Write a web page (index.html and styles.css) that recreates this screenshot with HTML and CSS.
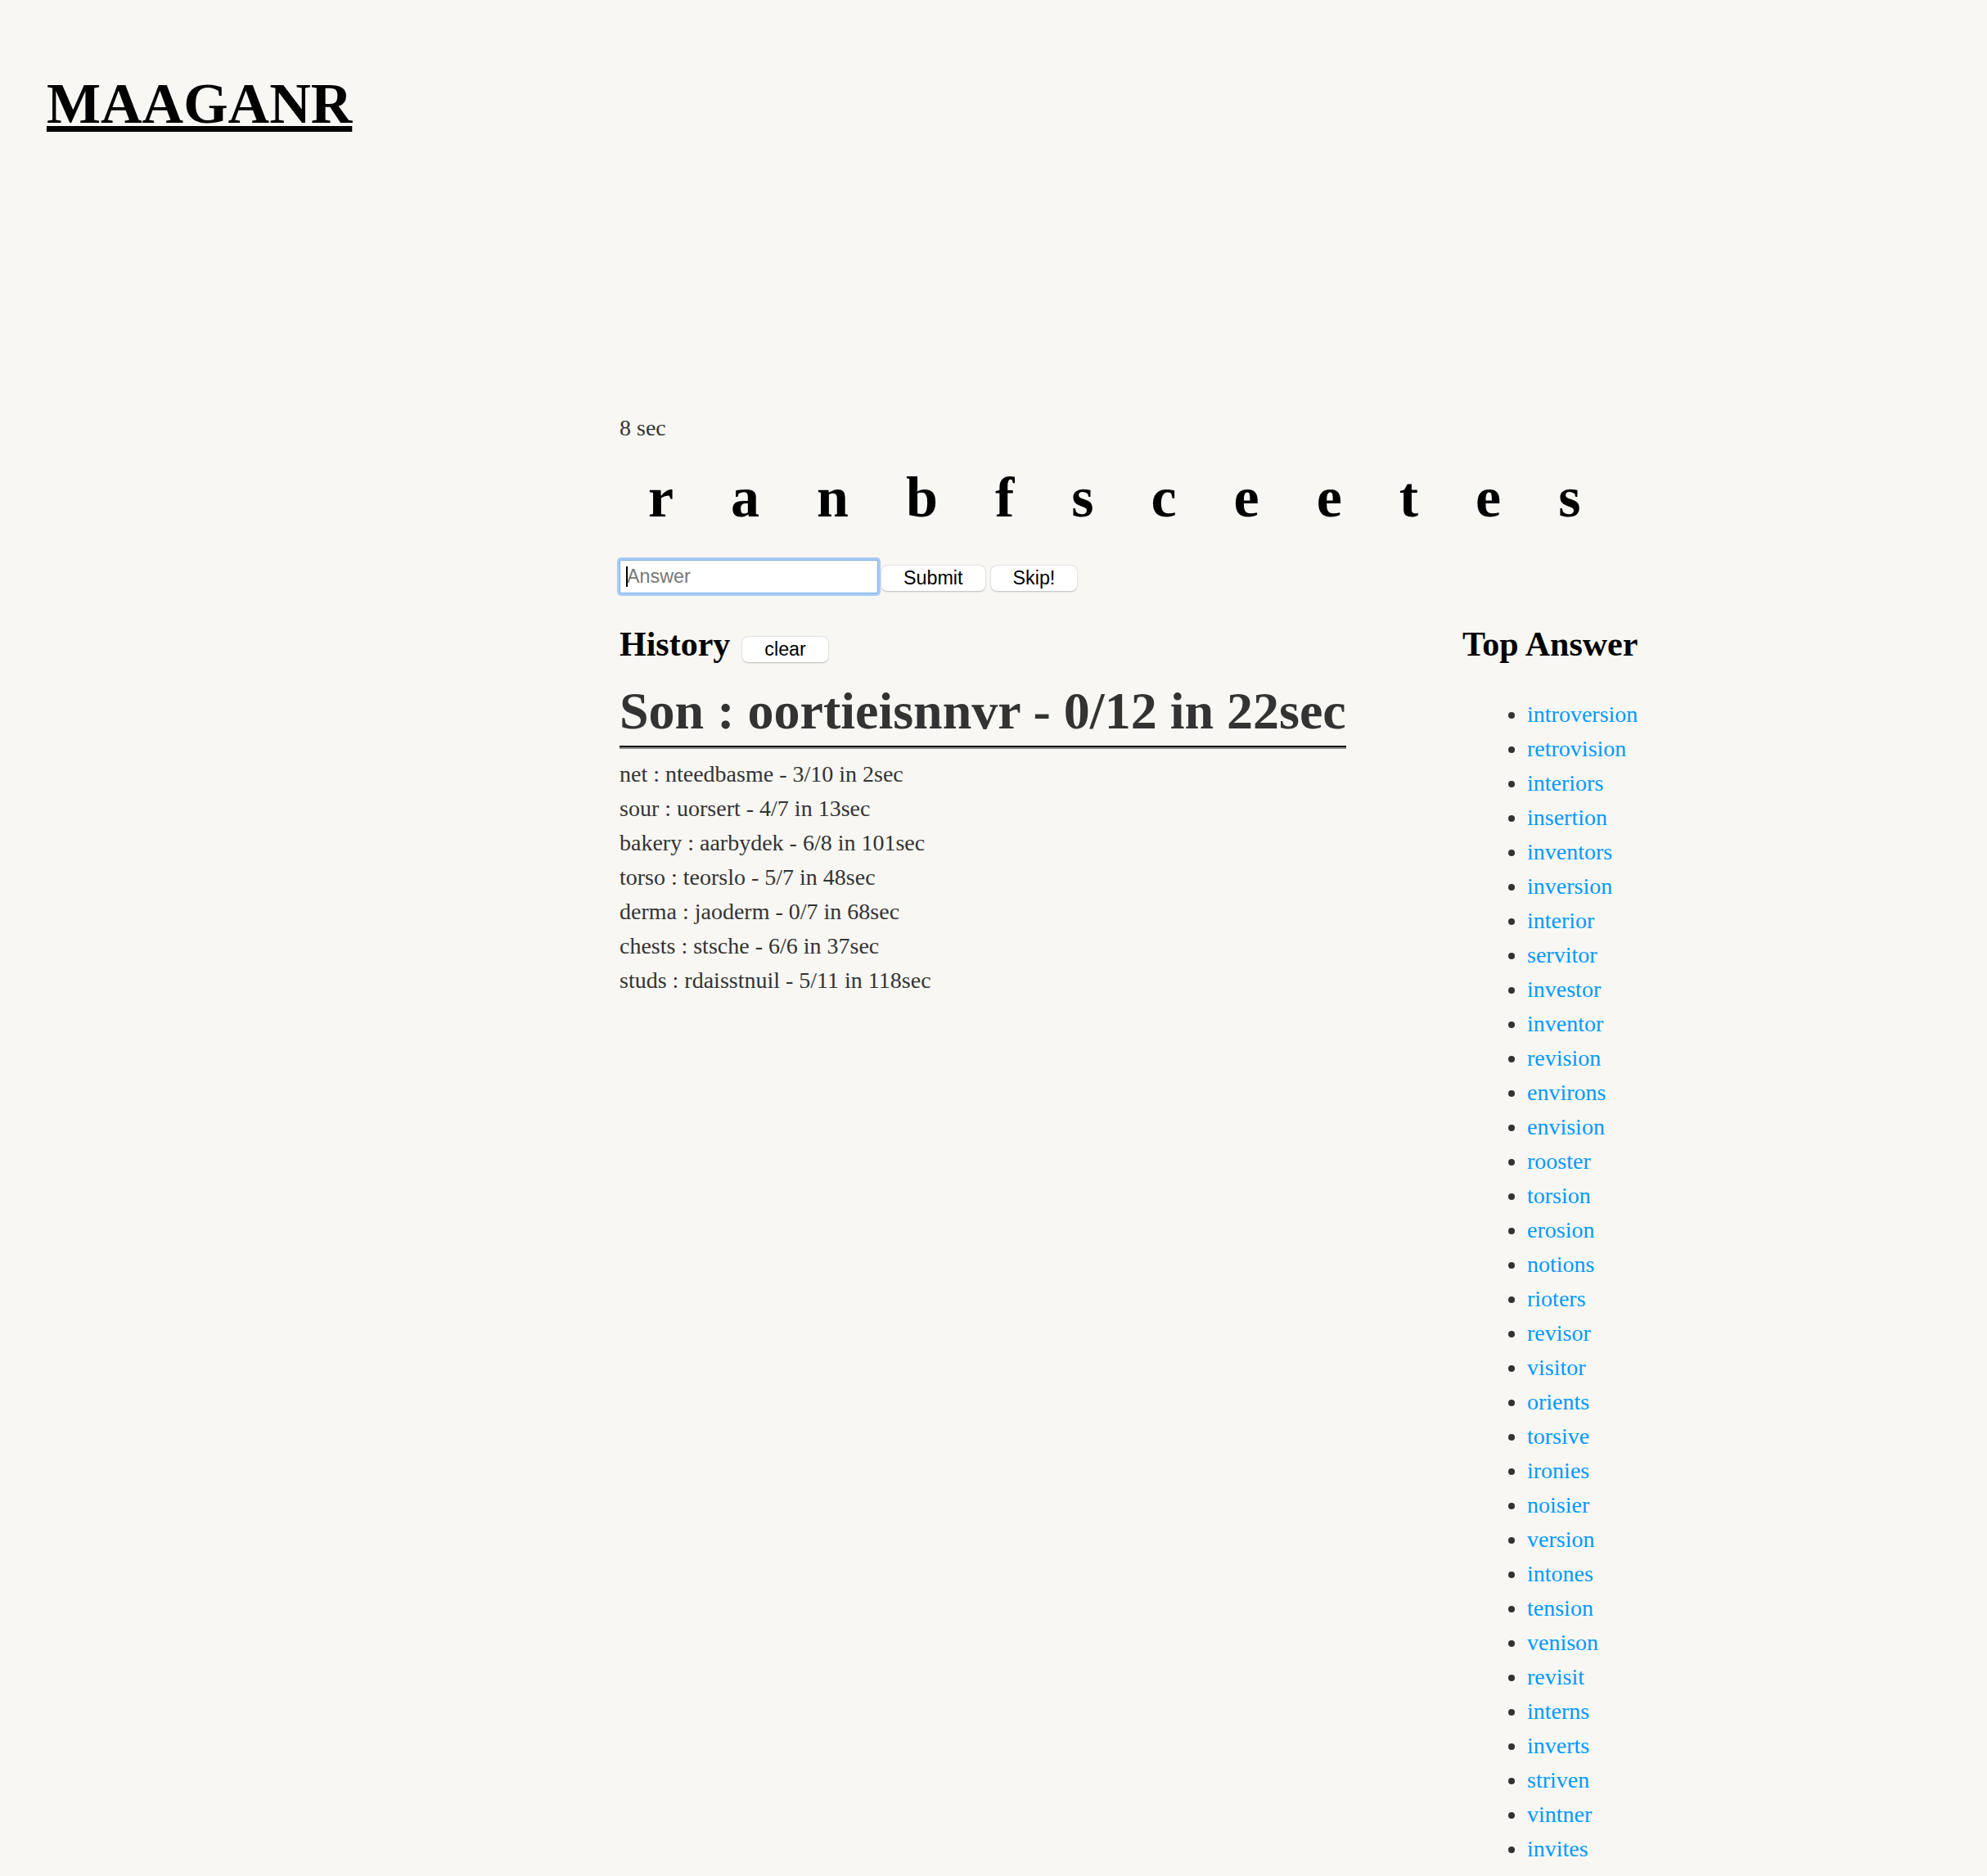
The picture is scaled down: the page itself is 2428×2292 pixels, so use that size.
FILE: index.html
```html
<!DOCTYPE html>
<html lang="en">
<head>
<meta charset="utf-8">
<title>MAAGANR</title>
<link rel="stylesheet" href="styles.css">
</head>
<body>
<header class="site-header">
  <h1 class="logo"><a href="#">MAAGANR</a></h1>
</header>
<main class="game">
  <div class="timer">8 sec</div>
  <div class="letters">
    <span>r</span><span>a</span><span>n</span><span>b</span><span>f</span><span>s</span><span>c</span><span>e</span><span>e</span><span>t</span><span>e</span><span>s</span>
  </div>
  <form class="answer-form" onsubmit="return false">
    <span class="answer-field"><input type="text" placeholder="Answer"><span class="caret"></span></span>
    <button type="button" class="btn btn-submit">Submit</button>
    <button type="button" class="btn btn-skip">Skip!</button>
  </form>
  <div class="columns">
    <section class="history">
      <div class="history-head">
        <h2 class="section-title">History</h2>
        <button type="button" class="btn">clear</button>
      </div>
      <h1 class="current">Son : oortieisnnvr - 0/12 in 22sec</h1>
      <ul class="history-list">
        <li>net : nteedbasme - 3/10 in 2sec</li>
        <li>sour : uorsert - 4/7 in 13sec</li>
        <li>bakery : aarbydek - 6/8 in 101sec</li>
        <li>torso : teorslo - 5/7 in 48sec</li>
        <li>derma : jaoderm - 0/7 in 68sec</li>
        <li>chests : stsche - 6/6 in 37sec</li>
        <li>studs : rdaisstnuil - 5/11 in 118sec</li>
      </ul>
    </section>
    <aside class="top-answers">
      <h2 class="section-title">Top Answer</h2>
      <ul class="answer-list">
        <li><a href="#">introversion</a></li>
        <li><a href="#">retrovision</a></li>
        <li><a href="#">interiors</a></li>
        <li><a href="#">insertion</a></li>
        <li><a href="#">inventors</a></li>
        <li><a href="#">inversion</a></li>
        <li><a href="#">interior</a></li>
        <li><a href="#">servitor</a></li>
        <li><a href="#">investor</a></li>
        <li><a href="#">inventor</a></li>
        <li><a href="#">revision</a></li>
        <li><a href="#">environs</a></li>
        <li><a href="#">envision</a></li>
        <li><a href="#">rooster</a></li>
        <li><a href="#">torsion</a></li>
        <li><a href="#">erosion</a></li>
        <li><a href="#">notions</a></li>
        <li><a href="#">rioters</a></li>
        <li><a href="#">revisor</a></li>
        <li><a href="#">visitor</a></li>
        <li><a href="#">orients</a></li>
        <li><a href="#">torsive</a></li>
        <li><a href="#">ironies</a></li>
        <li><a href="#">noisier</a></li>
        <li><a href="#">version</a></li>
        <li><a href="#">intones</a></li>
        <li><a href="#">tension</a></li>
        <li><a href="#">venison</a></li>
        <li><a href="#">revisit</a></li>
        <li><a href="#">interns</a></li>
        <li><a href="#">inverts</a></li>
        <li><a href="#">striven</a></li>
        <li><a href="#">vintner</a></li>
        <li><a href="#">invites</a></li>
        <li><a href="#">intros</a></li>
        <li><a href="#">irons</a></li>
      </ul>
    </aside>
  </div>
</main>
</body>
</html>
```

FILE: styles.css
```css
html, body {
  margin: 0;
  padding: 0;
}

body {
  background: #f8f7f3;
  color: #333;
  font-family: "Liberation Serif", "Times New Roman", serif;
  font-size: 28px;
  line-height: 42px;
}

.site-header {
  padding: 87px 0 0 57px;
}

.logo {
  margin: 0;
  font-size: 70px;
  line-height: 80px;
  font-weight: bold;
}

.logo a {
  color: #000;
  text-decoration: underline;
}

.game {
  margin-left: 757px;
  padding-top: 335px;
}

.timer {
  line-height: 42px;
}

.letters {
  display: flex;
  margin-top: 24px;
  font-size: 70px;
  line-height: 80px;
  font-weight: bold;
  color: #000;
}

.letters span {
  margin: 0 35px;
}

.answer-form {
  display: flex;
  align-items: flex-start;
  margin-top: 36px;
  height: 41px;
}

.answer-field {
  position: relative;
  display: block;
  margin-right: 4px;
}

.answer-field input {
  box-sizing: border-box;
  display: block;
  width: 316px;
  height: 41px;
  margin: 0;
  padding: 0 8px;
  border: 1px solid #79ace9;
  border-radius: 2px;
  box-shadow: 0 0 0 3px #a8ccf5;
  background: #fff;
  font-family: "Liberation Sans", Arial, sans-serif;
  font-size: 23.3px;
  color: #000;
  outline: none;
}

.answer-field input::placeholder {
  color: #777;
}

.caret {
  position: absolute;
  left: 8px;
  top: 8px;
  width: 2px;
  height: 25px;
  background: #000;
}

.btn {
  box-sizing: border-box;
  height: 31px;
  margin: 0;
  padding: 0 27px;
  border: 0;
  border-radius: 7px;
  background: #fff;
  box-shadow: 0 0.5px 2px rgba(0, 0, 0, 0.22), 0 0 0 0.5px rgba(0, 0, 0, 0.06);
  font-family: "Liberation Sans", Arial, sans-serif;
  font-size: 23.3px;
  line-height: 31px;
  color: #000;
}

.answer-form .btn {
  margin-top: 7px;
}

.btn-skip {
  margin-left: 7px;
}

.columns {
  display: flex;
  align-items: flex-start;
  margin-top: 35px;
}

.history {
  width: 1030px;
  flex: none;
}

.history-head {
  display: flex;
  align-items: baseline;
  gap: 15px;
  margin-top: 2px;
}

.section-title {
  margin: 0;
  font-size: 42px;
  line-height: 50px;
  font-weight: bold;
  color: #000;
}

.current {
  width: fit-content;
  margin: 20px 0 0;
  padding-bottom: 5px;
  font-size: 64px;
  line-height: 74px;
  font-weight: bold;
  color: #333;
  border-bottom: 2px solid #111;
  box-shadow: 0 2px 0 #8c8c8c;
}

.history-list {
  list-style: none;
  margin: 12px 0 0;
  padding: 0;
}

.top-answers .section-title {
  margin-top: 2px;
}

.answer-list {
  margin: 40px 0 0;
  padding-left: 79px;
}

.answer-list a {
  color: #0099ff;
  text-decoration: none;
}
```
